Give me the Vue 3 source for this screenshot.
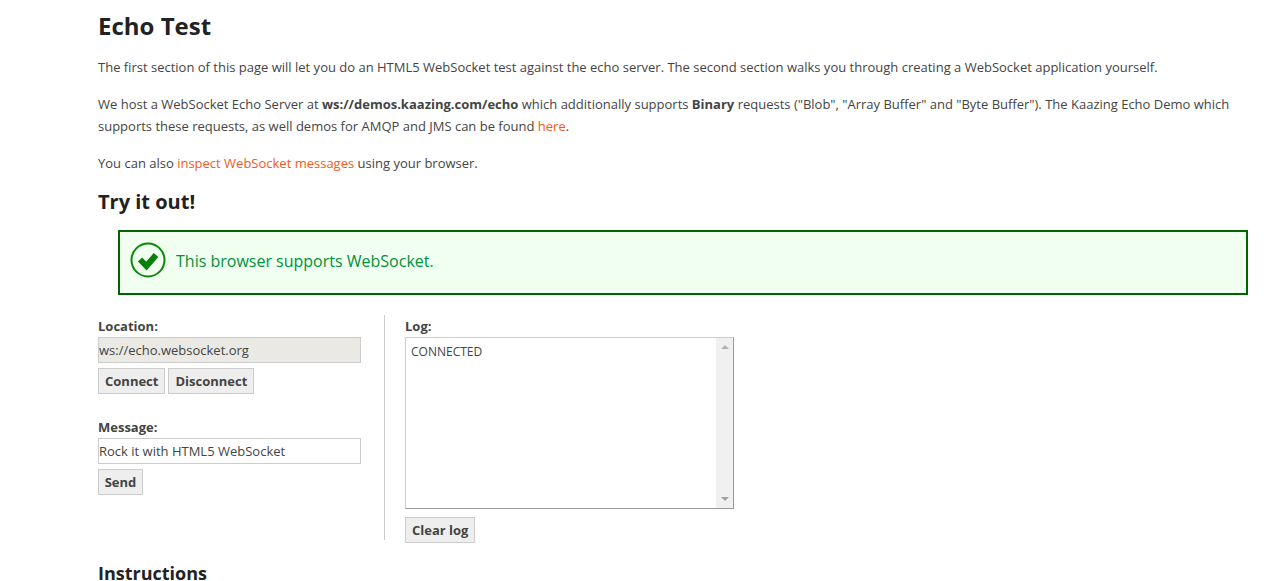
<script setup>
</script>

<template>
  <main class="page">
    <h1>Echo Test</h1>
    <p class="p1">The first section of this page will let you do an HTML5 WebSocket test against the echo server. The second section walks you through creating a WebSocket application yourself.</p>
    <p class="p2">We host a WebSocket Echo Server at <strong>ws://demos.kaazing.com/echo</strong> which additionally supports <strong>Binary</strong> requests ("Blob", "Array Buffer" and "Byte Buffer"). The Kaazing Echo Demo which supports these requests, as well demos for AMQP and JMS can be found <a href="#">here</a>.</p>
    <p class="p3">You can also <a href="#">inspect WebSocket messages</a> using your browser.</p>
    <h2 class="try">Try it out!</h2>
    <div class="notice">
      <svg class="check" width="36" height="36" viewBox="0 0 36 36">
        <circle cx="18" cy="18" r="16.5" fill="none" stroke="#088a08" stroke-width="2" />
        <path d="M10 17.5 L16.5 24 L26 13" fill="none" stroke="#088008" stroke-width="6" />
      </svg>
      <span class="notice-text">This browser supports WebSocket.</span>
    </div>
    <div class="demo">
      <div class="left">
        <label>Location:</label>
        <input class="field disabled" value="ws://echo.websocket.org" disabled />
        <div class="buttons">
          <button>Connect</button>
          <button>Disconnect</button>
        </div>
        <label class="msg">Message:</label>
        <input class="field" value="Rock it with HTML5 WebSocket" />
        <div class="buttons">
          <button class="send">Send</button>
        </div>
      </div>
      <div class="right">
        <label>Log:</label>
        <div class="log">
          <div class="log-text">CONNECTED</div>
          <div class="scroll">
            <span class="up"></span>
            <span class="down"></span>
          </div>
        </div>
        <div class="buttons">
          <button>Clear log</button>
        </div>
      </div>
    </div>
    <h2 class="instr">Instructions</h2>
  </main>
</template>

<style>
html, body { margin: 0; overflow: hidden; background: #fff; }
</style>

<style scoped>
.page {
  height: 581px;
  overflow: hidden;
  box-sizing: border-box;
  padding: 0 31px 0 98px;
  font-family: "Open Sans", sans-serif;
  font-size: 13px;
  line-height: 22px;
  color: #444;
}
h1 {
  margin: 0;
  padding-top: 11px;
  font-size: 24px;
  line-height: 30px;
  font-weight: 700;
  color: #222;
}
h2 {
  margin: 0;
  font-size: 20px;
  line-height: 26px;
  font-weight: 700;
  color: #222;
}
p { margin: 0; }
.p1 { margin-top: 15px; }
.p2 { margin-top: 15px; }
.p3 { margin-top: 15px; }
a { color: #f15a22; text-decoration: none; }
strong { font-weight: 700; }
.try { margin-top: 15px; }
.notice {
  margin: 15px 0 0 20px;
  width: 1130px;
  height: 65px;
  box-sizing: border-box;
  border: 2px solid #006400;
  background: #f0fff0;
  display: flex;
  align-items: center;
  padding-left: 10px;
  gap: 10px;
  font-size: 16px;
  color: #00913a;
}
.check { flex: none; margin-bottom: 6px; }
.notice-text { padding-bottom: 4px; }
.demo {
  display: flex;
  margin-top: 20px;
  height: 225px;
}
.left {
  width: 286px;
  border-right: 1px solid #ccc;
  display: flex;
  flex-direction: column;
  align-items: flex-start;
}
.right {
  padding-left: 20px;
  display: flex;
  flex-direction: column;
  align-items: flex-start;
}
label {
  font-weight: 700;
  line-height: 22px;
  height: 22px;
}
.msg { margin-top: 22px; }
.field {
  width: 263px;
  height: 26px;
  box-sizing: border-box;
  border: 1px solid #ccc;
  padding: 0;
  margin: 0;
  font: 13px "Open Sans", sans-serif;
  color: #444;
  background: #fff;
  outline: none;
}
.field.disabled {
  background: #ebe9e3;
  opacity: 1;
}
.buttons {
  display: flex;
  gap: 3px;
  margin-top: 5px;
}
button {
  height: 26px;
  box-sizing: border-box;
  border: 1px solid #ccc;
  background: #eee;
  padding: 0 6px;
  font: 700 13px "Open Sans", sans-serif;
  color: #444;
}
.send { width: 45px; padding: 0; }
.log {
  width: 329px;
  height: 172px;
  box-sizing: border-box;
  border: 1px solid #ccc;
  border-right-color: #999;
  border-bottom-color: #999;
  display: flex;
  flex: none;
  font-size: 12px;
  line-height: 18px;
  height: 172px;
}
.log-text {
  flex: 1;
  padding: 5px;
}
.scroll {
  width: 17px;
  background: #f0f0f0;
  display: flex;
  flex-direction: column;
  justify-content: space-between;
  align-items: center;
  padding: 7px 0;
}
.up, .down {
  width: 0;
  height: 0;
  border-left: 4px solid transparent;
  border-right: 4px solid transparent;
}
.up { border-bottom: 4px solid #b0b0b0; }
.down { border-top: 4px solid #a0a0a0; }
.right .buttons { margin-top: 8px; flex: none; }
.instr { margin-top: 20px; font-size: 18px; }
</style>
